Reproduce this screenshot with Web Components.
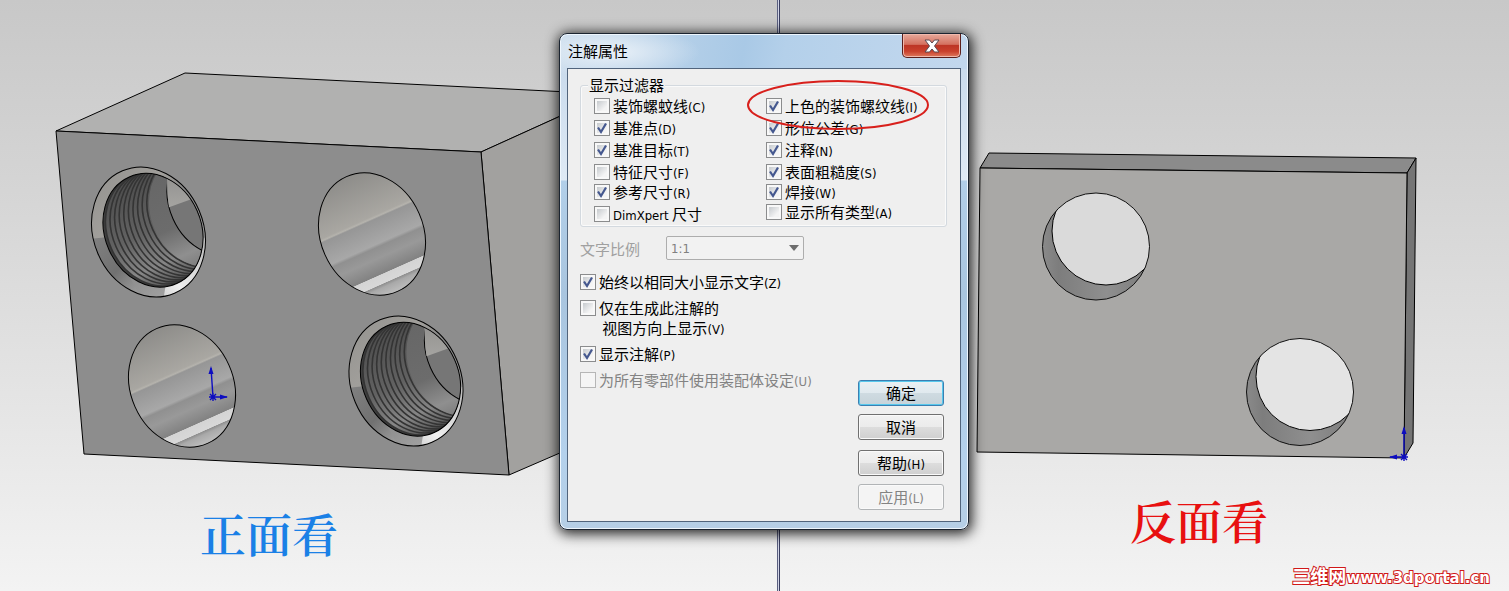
<!DOCTYPE html>
<html lang="zh-CN">
<head>
<meta charset="utf-8">
<title>注解属性</title>
<style>
  :root {
    --uiFont: "Noto Sans CJK SC", sans-serif;
    --latinFont: "DejaVu Sans Condensed", "Noto Sans", sans-serif;
    --textSize: 15px;
    --latinSize: 13px;
  }
  html, body {
    height: 100%;
    margin: 0;
  }
  body {
    font-family: var(--uiFont);
    font-size: var(--textSize);
  }
</style>
</head>
<body>
<cad-workspace>
  <model-view slot="front" kind="block" color="#1a80e6">正面看</model-view>
  <model-view slot="back" kind="plate" color="#e81010">反面看</model-view>
  <annotation-dialog slot="window"></annotation-dialog>
  <site-mark slot="mark">三维网<b>www.3dportal.cn</b></site-mark>
</cad-workspace>

<script>
// Build a template from markup
function makeTemplate(html) {
  const template = document.createElement('template');
  template.innerHTML = html;
  return template;
}

// Base class: clone the element's template into an open shadow root
class BaseElement extends HTMLElement {
  constructor() {
    super();
    this._shadowRoot = this.attachShadow({ mode: 'open' });
    this._shadowRoot.appendChild(this.constructor.template.content.cloneNode(true));
  }
}

/* ---------- workspace: two views with a splitter ---------- */

class CadWorkspace extends BaseElement {
  static template = makeTemplate(`
    <style>
      :host {
        position: relative;
        display: grid;
        grid-template-columns: 777fr 3px 729fr;
        grid-template-rows: 100%;
        height: 100%;
        overflow: hidden;
        background: linear-gradient(#c8c8c8, #d4d4d4 30%, #e9e9e9 78%, #f3f3f3);
      }
      .splitter {
        background: linear-gradient(90deg, #5a5f80 0 1px, #d3d6e8 1px 2px, #3a3f60 2px);
      }
    </style>
    <slot name="front"></slot>
    <div class="splitter"></div>
    <slot name="back"></slot>
    <slot name="window"></slot>
    <slot name="mark"></slot>
  `);
}

/* ---------- 3D views ---------- */

// Plain drilled hole, drawn round its own centre
const plainHole = (x, y) => `
  <ellipse transform="translate(${x} ${y}) rotate(-24)" rx="51.4" ry="62.8" fill="url(#bore)" stroke="#000"/>
`;

// Tapped hole: chamfer, thread rings, smooth wall and the far opening
function threadHole(x, y) {
  let rings = '';
  for (let i = 0; i < 10; i++) {
    const dx = 2.5 + i * 4.6;
    const dy = -1 - i * 2.1;
    rings += `<ellipse transform="translate(${dx} ${dy}) rotate(-24)" rx="48.2" ry="58.3" fill="url(#groove)" stroke="#343434" stroke-width="1.6"/>`;
  }
  return `
    <g transform="translate(${x} ${y})">
      <g clip-path="url(#rimClip)">
        <rect x="-70" y="-75" width="140" height="150" fill="url(#rim)"/>
        <path d="M-70 8 L-40 5 L0 80 L-70 80Z" fill="url(#rimLow)"/>
        <path d="M17 54 L13 80 L80 80 L80 10 L52 5Z" fill="url(#rimLight)"/>
      </g>
      <ellipse transform="rotate(-23)" rx="55" ry="66.5" fill="none" stroke="#000"/>
      <g transform="translate(4.5 -1.8)">
        <g clip-path="url(#tapClip)">
          <rect x="-60" y="-65" width="120" height="130" fill="#3f3f3f"/>
          ${rings}
          <ellipse transform="translate(46 -20) rotate(-24)" rx="48.2" ry="58.3" fill="url(#wall)"/>
          <ellipse transform="translate(64 -31) rotate(-24)" rx="48.2" ry="58.3" fill="#767676" stroke="#000"/>
          <path d="M14 -52 Q14 -36 16 -23 L41 -32 L50 -70Z" fill="url(#farLight)"/>
        </g>
        <ellipse transform="rotate(-24)" rx="48.2" ry="58.3" fill="none" stroke="#000"/>
      </g>
    </g>
  `;
}

// Through hole in the plate, with the lower left wall visible
const throughHole = (x, y, id, fill) => `
  <clipPath id="${id}"><circle cx="${x}" cy="${y}" r="53.5"/></clipPath>
  <circle cx="${x}" cy="${y}" r="53.5" fill="url(#plateBore)"/>
  <g clip-path="url(#${id})">
    <circle cx="${x + 10}" cy="${y - 15.5}" r="54" fill="${fill}" stroke="#000"/>
  </g>
  <circle cx="${x}" cy="${y}" r="53.5" fill="none" stroke="#111"/>
`;

// Origin marker with an upward arrow and one to the side
const origin = (x, y, side, lean) => `
  <g transform="translate(${x} ${y})" stroke="#0d0dc0" stroke-width="1.4" fill="#0d0dc0">
    <path d="M0 0L${lean} -29M0 0H${14 * side}M-4 0H4M0 -4V4M-3 -3L3 3M3 -3L-3 3"/>
    <path stroke="none" d="M${lean} -31l-2.5 8h5zM${15 * side} 0l${-8 * side} -2.5v5z"/>
  </g>
`;

const scenes = {
  block: {
    viewBox: '0 0 777 591',
    html: () => `
      <defs>
        <linearGradient id="bore" gradientUnits="userSpaceOnUse" x1="0" y1="-62" x2="0" y2="62">
          <stop offset="0" stop-color="#8e8d8a"/><stop offset=".37" stop-color="#a9a7a2"/>
          <stop offset=".387" stop-color="#b5b3ad"/><stop offset=".4" stop-color="#969696"/>
          <stop offset=".59" stop-color="#a8a8a8"/><stop offset=".615" stop-color="#909090"/>
          <stop offset=".7" stop-color="#999"/><stop offset=".825" stop-color="#828282"/>
          <stop offset=".83" stop-color="#d4d4d4"/><stop offset=".9" stop-color="#d8d8d8"/>
          <stop offset=".905" stop-color="#8f8f8f"/><stop offset=".93" stop-color="#a9a9a9"/>
          <stop offset="1" stop-color="#bcbcbc"/>
        </linearGradient>
        <linearGradient id="rim" x1="0" y1="0" x2="1" y2="1">
          <stop offset="0" stop-color="#8e8d8a"/><stop offset=".35" stop-color="#a19f9b"/>
          <stop offset=".5" stop-color="#858585"/><stop offset="1" stop-color="#b8b8b8"/>
        </linearGradient>
        <linearGradient id="rimLow" x1="0" y1="0" x2="1" y2="1">
          <stop offset="0" stop-color="#858585"/><stop offset=".5" stop-color="#717171"/>
          <stop offset=".85" stop-color="#a4a4a4"/><stop offset="1" stop-color="#858585"/>
        </linearGradient>
        <linearGradient id="rimLight" x1="0" y1="1" x2="1" y2="0">
          <stop offset="0" stop-color="#c4c4c4"/><stop offset=".3" stop-color="#f0f0f0"/>
          <stop offset="1" stop-color="#a8a8a8"/>
        </linearGradient>
        <linearGradient id="groove" x1="0" y1="0" x2="0" y2="1">
          <stop offset="0" stop-color="#4c4c4c"/><stop offset=".5" stop-color="#626262"/>
          <stop offset=".8" stop-color="#868686"/><stop offset="1" stop-color="#525252"/>
        </linearGradient>
        <linearGradient id="wall" x1="0" y1="0" x2="0" y2="1">
          <stop offset="0" stop-color="#666"/><stop offset=".55" stop-color="#6c6c6c"/>
          <stop offset=".8" stop-color="#8f8f8f"/><stop offset="1" stop-color="#747474"/>
        </linearGradient>
        <linearGradient id="farLight" x1="0" y1="0" x2="0" y2="1">
          <stop offset="0" stop-color="#8b8a88"/><stop offset="1" stop-color="#a5a4a1"/>
        </linearGradient>
        <clipPath id="rimClip"><ellipse transform="rotate(-23)" rx="55" ry="66.5"/></clipPath>
        <clipPath id="tapClip"><ellipse transform="rotate(-24)" rx="48.2" ry="58.3"/></clipPath>
      </defs>
      <g stroke="#000" stroke-linejoin="round">
        <path fill="#b1b1b0" d="M56 131L185 73L609 94L481 152Z"/>
        <path fill="#a2a19f" d="M481 152L609 94L636 420L509 475Z"/>
        <path fill="#8d8d8d" d="M56 131L481 152L509 475L84 454Z"/>
      </g>
      ${threadHole(148.5, 232)}
      ${plainHole(372, 234)}
      ${plainHole(182, 386)}
      ${threadHole(406, 381)}
      ${origin(213, 397, 1, -2)}
    `
  },
  plate: {
    viewBox: '780 0 729 591',
    html: () => `
      <defs>
        <linearGradient id="plateBore" x1="0" y1="0" x2="1" y2="0">
          <stop offset="0" stop-color="#8a8a8a"/><stop offset=".15" stop-color="#7d7d7d"/>
          <stop offset=".6" stop-color="#8f8f8f"/><stop offset="1" stop-color="#7b7b7b"/>
        </linearGradient>
      </defs>
      <g stroke="#000" stroke-linejoin="round">
        <path fill="#8b8b8b" d="M980 168L989 153L1416 158L1407 173Z"/>
        <path fill="#757575" d="M1407 173L1416 158L1413 443L1404 458Z"/>
        <path fill="#a9a8a6" d="M980 168L1407 173L1404 458L977 452Z"/>
      </g>
      ${throughHole(1096, 246.5, 'holeA', '#dadada')}
      ${throughHole(1300, 392, 'holeB', '#e4e4e4')}
      ${origin(1404, 457, -1, 0)}
    `
  }
};

class ModelView extends BaseElement {
  static template = makeTemplate(`
    <style>
      :host {
        display: grid;
        grid-template: 100% / 100%;
        min-width: 0;
      }
      svg {
        grid-area: 1 / 1;
        width: 100%;
        height: 100%;
      }
      .caption {
        grid-area: 1 / 1;
        align-self: end;
        justify-self: start;
        font-family: "Noto Serif CJK SC", "Noto Sans CJK SC", serif;
        font-size: 46px;
        font-weight: 600;
        line-height: 48px;
      }
      :host([kind="block"]) .caption { margin: 0 0 35px 200px; }
      :host([kind="plate"]) .caption { margin: 0 0 48px 350px; }
    </style>
    <svg aria-hidden="true"></svg>
    <div class="caption"><slot></slot></div>
  `);

  connectedCallback() {
    const scene = scenes[this.getAttribute('kind')];
    const svg = this._shadowRoot.querySelector('svg');
    svg.setAttribute('viewBox', scene.viewBox);
    svg.innerHTML = scene.html();
    this._shadowRoot.querySelector('.caption').style.color = this.getAttribute('color');
  }
}

class SiteMark extends BaseElement {
  static template = makeTemplate(`
    <style>
      :host {
        position: absolute;
        right: 19px;
        bottom: 2px;
        color: #fff;
        font-size: 18px;
        font-weight: 700;
        line-height: 22px;
        white-space: nowrap;
        -webkit-text-stroke: 2px #d01818;
        paint-order: stroke fill;
      }
      ::slotted(b) {
        font-family: "DejaVu Sans", sans-serif;
        font-size: 15px;
      }
    </style>
    <slot></slot>
  `);
}

/* ---------- dialog controls ---------- */

class CheckOption extends BaseElement {
  static template = makeTemplate(`
    <style>
      :host {
        display: block;
        color: #000;
        line-height: 20px;
      }
      :host([disabled]) { color: #838383; }
      label {
        display: flex;
        align-items: flex-start;
        gap: 3px;
        white-space: nowrap;
      }
      input {
        appearance: none;
        flex: none;
        box-sizing: border-box;
        width: 16px;
        height: 16px;
        margin: 2px 0;
        border: 1px solid #8b8c8d;
        background: linear-gradient(135deg, #c6cace, #f4f4f4 75%) content-box, #f8f8f8;
        padding: 2px;
      }
      input:disabled {
        border-color: #b6b6b6;
        background: #f5f5f5;
      }
      .box {
        display: grid;
      }
      .box > * { grid-area: 1 / 1; }
      svg {
        width: 16px;
        height: 16px;
        margin: 2px 0;
        pointer-events: none;
        visibility: hidden;
      }
      input:checked + svg { visibility: visible; }
      ::slotted(small) {
        font-family: var(--latinFont);
        font-size: var(--latinSize);
        line-height: 1;
      }
    </style>
    <label>
      <span class="box">
        <input type="checkbox">
        <svg viewBox="0 0 16 16"><path d="M4 7.5L7 12L12 3.5" fill="none" stroke="#45588f" stroke-width="2.2"/></svg>
      </span>
      <span><slot></slot></span>
    </label>
  `);

  connectedCallback() {
    const input = this._shadowRoot.querySelector('input');
    input.checked = this.hasAttribute('checked');
    input.disabled = this.hasAttribute('disabled');
  }
}

class PushButton extends BaseElement {
  static template = makeTemplate(`
    <style>
      :host { display: block; }
      button {
        display: block;
        box-sizing: border-box;
        width: 100%;
        height: 26px;
        padding: 0;
        border: 1px solid #707070;
        border-radius: 3px;
        background: linear-gradient(#f2f2f2, #ebebeb 50%, #dddddd 50%, #cfcfcf);
        box-shadow: inset 0 0 0 1px #fafafa;
        color: #000;
        font: inherit;
        line-height: 22px;
      }
      :host([default]) button {
        border-color: #3c7fb1;
        background: linear-gradient(#eaf0f3, #e0e9ee 50%, #cfdbe1 50%, #c6d3da);
        box-shadow: inset 0 0 0 1px #58c8ec;
      }
      button:disabled {
        border-color: #b1b4b6;
        background: #f4f4f4;
        color: #838383;
      }
      ::slotted(small) {
        font-family: var(--latinFont);
        font-size: var(--latinSize);
        line-height: 1;
      }
    </style>
    <button type="button"><slot></slot></button>
  `);

  connectedCallback() {
    this._shadowRoot.querySelector('button').disabled = this.hasAttribute('disabled');
  }
}

class AnnotationDialog extends BaseElement {
  static template = makeTemplate(`
    <style>
      /* floating window over the two views */
      :host {
        position: absolute;
        top: 33px;
        left: 559px;
        box-sizing: border-box;
        display: flex;
        flex-direction: column;
        width: 410px;
        min-height: 497px;
        padding: 0 7px 7px;
        border: 1px solid #1b2430;
        border-radius: 8px;
        background:
          radial-gradient(ellipse 90px 26px at 50px 18px, #eaf1f8, transparent),
          linear-gradient(100deg, #c9dbec, #a9c9e6 45%, #b4d0ea 55%, #c3d8ee) 0 0 / 100% 35px no-repeat,
          linear-gradient(#c3d6ea, #dfeaf5 146px, #b2cfe9 147px, #a9c5df 260px, #b4d1ec 420px, #b6cfe6);
        box-shadow: inset 0 0 0 1px #eef6fd, 1px 2px 13px 2px rgba(0, 0, 0, .85);
      }
      header {
        display: flex;
        align-items: flex-start;
        justify-content: space-between;
        height: 34px;
      }
      h1 {
        margin: 0;
        padding-left: 1px;
        font-size: var(--textSize);
        font-weight: 400;
        line-height: 34px;
      }
      .close {
        display: grid;
        place-items: center;
        width: 59px;
        height: 24px;
        padding: 0;
        border: 1px solid #5b1f1c;
        border-top: 0;
        border-radius: 0 0 5px 5px;
        background: linear-gradient(#e6a99b, #d4705f 45%, #bd3525 50%, #c9402c 75%, #df7a5e);
        box-shadow: inset 0 0 0 1px #f0b9ad;
      }
      .close svg {
        width: 16px;
        height: 14px;
      }
      .body {
        display: flex;
        flex: 1;
        flex-direction: column;
        padding: 6px 13px 11px 12px;
        border: 1px solid #51647c;
        background: #efefef;
      }
      fieldset {
        display: grid;
        grid-template-columns: 1fr 1fr;
        min-width: 0;
        margin: 0;
        padding: 1px 8px 2px 13px;
        border: 1px solid #d3d9df;
        border-radius: 3px;
        box-shadow: inset 0 0 0 1px #fafafa;
      }
      legend {
        /* pulled back so the text starts just inside the corner */
        margin-left: -6px;
        padding: 0 1px;
        background: #efefef;
        line-height: 20px;
      }
      .column, .options, .actions {
        display: flex;
        flex-direction: column;
      }
      .column { gap: 2px; }
      .column .tight { margin-top: -2px; }
      .lower {
        display: flex;
        flex: 1;
        justify-content: space-between;
        padding-top: 9px;
      }
      .options { gap: 6px; }
      .ratio {
        display: flex;
        align-items: center;
        margin-bottom: 6px;
        color: #a0a0a0;
      }
      .ratio label { width: 86px; }
      .pick { display: grid; }
      .pick > * { grid-area: 1 / 1; }
      .pick svg {
        place-self: center end;
        width: 10px;
        height: 6px;
        margin-right: 5px;
        pointer-events: none;
      }
      select {
        appearance: none;
        box-sizing: border-box;
        width: 138px;
        height: 24px;
        padding: 0 4px;
        border: 1px solid #adadad;
        border-radius: 2px;
        background: #f2f2f2;
        color: #808080;
        font-family: var(--latinFont);
        font-size: var(--latinSize);
        opacity: 1;
      }
      .actions {
        align-self: flex-end;
        gap: 8px;
        width: 86px;
        margin-right: 3px;
      }
      .apart { margin-top: 2px; }
      /* hand-drawn ring over the first entry of the second column */
      .ring {
        position: absolute;
        top: 45px;
        left: 186px;
        width: 184px;
        height: 53px;
        pointer-events: none;
      }
    </style>
    <header>
      <h1>注解属性</h1>
      <button class="close" type="button" aria-label="关闭">
        <svg viewBox="0 0 16 14"><path d="M1 1H5.5L8 4L10.5 1H15L10.5 7L15 13H10.5L8 10L5.5 13H1L5.5 7Z" fill="#fff" stroke="#5a4a52" stroke-linejoin="round"/></svg>
      </button>
    </header>
    <div class="body">
      <fieldset>
        <legend>显示过滤器</legend>
        <div class="column">
          <check-option>装饰螺蚊线<small>(C)</small></check-option>
          <check-option checked>基准点<small>(D)</small></check-option>
          <check-option checked>基准目标<small>(T)</small></check-option>
          <check-option>特征尺寸<small>(F)</small></check-option>
          <check-option class="tight" checked>参考尺寸<small>(R)</small></check-option>
          <check-option><small>DimXpert</small> 尺寸</check-option>
        </div>
        <div class="column">
          <check-option checked>上色的装饰螺纹线<small>(I)</small></check-option>
          <check-option checked>形位公差<small>(G)</small></check-option>
          <check-option checked>注释<small>(N)</small></check-option>
          <check-option checked>表面粗糙度<small>(S)</small></check-option>
          <check-option class="tight" checked>焊接<small>(W)</small></check-option>
          <check-option class="tight">显示所有类型<small>(A)</small></check-option>
        </div>
      </fieldset>
      <div class="lower">
        <div class="options">
          <div class="ratio">
            <label for="ratio">文字比例</label>
            <span class="pick">
              <select id="ratio" disabled><option>1:1</option></select>
              <svg viewBox="0 0 10 6"><path d="M0 0H10L5 6Z" fill="#6d6d6d"/></svg>
            </span>
          </div>
          <check-option checked>始终以相同大小显示文字<small>(Z)</small></check-option>
          <check-option>仅在生成此注解的<br>&nbsp;视图方向上显示<small>(V)</small></check-option>
          <check-option checked>显示注解<small>(P)</small></check-option>
          <check-option disabled>为所有零部件使用装配体设定<small>(U)</small></check-option>
        </div>
        <div class="actions">
          <push-button default>确定</push-button>
          <push-button>取消</push-button>
          <push-button class="apart">帮助<small>(H)</small></push-button>
          <push-button disabled>应用<small>(L)</small></push-button>
        </div>
      </div>
    </div>
    <svg class="ring" viewBox="0 0 184 53" aria-hidden="true">
      <ellipse cx="92" cy="26" rx="90" ry="24" fill="none" stroke="#d8201c" stroke-width="2"/>
    </svg>
  `);
}

// Define custom elements
window.customElements.define('check-option', CheckOption);
window.customElements.define('push-button', PushButton);
window.customElements.define('annotation-dialog', AnnotationDialog);
window.customElements.define('model-view', ModelView);
window.customElements.define('site-mark', SiteMark);
window.customElements.define('cad-workspace', CadWorkspace);
</script>
</body>
</html>
